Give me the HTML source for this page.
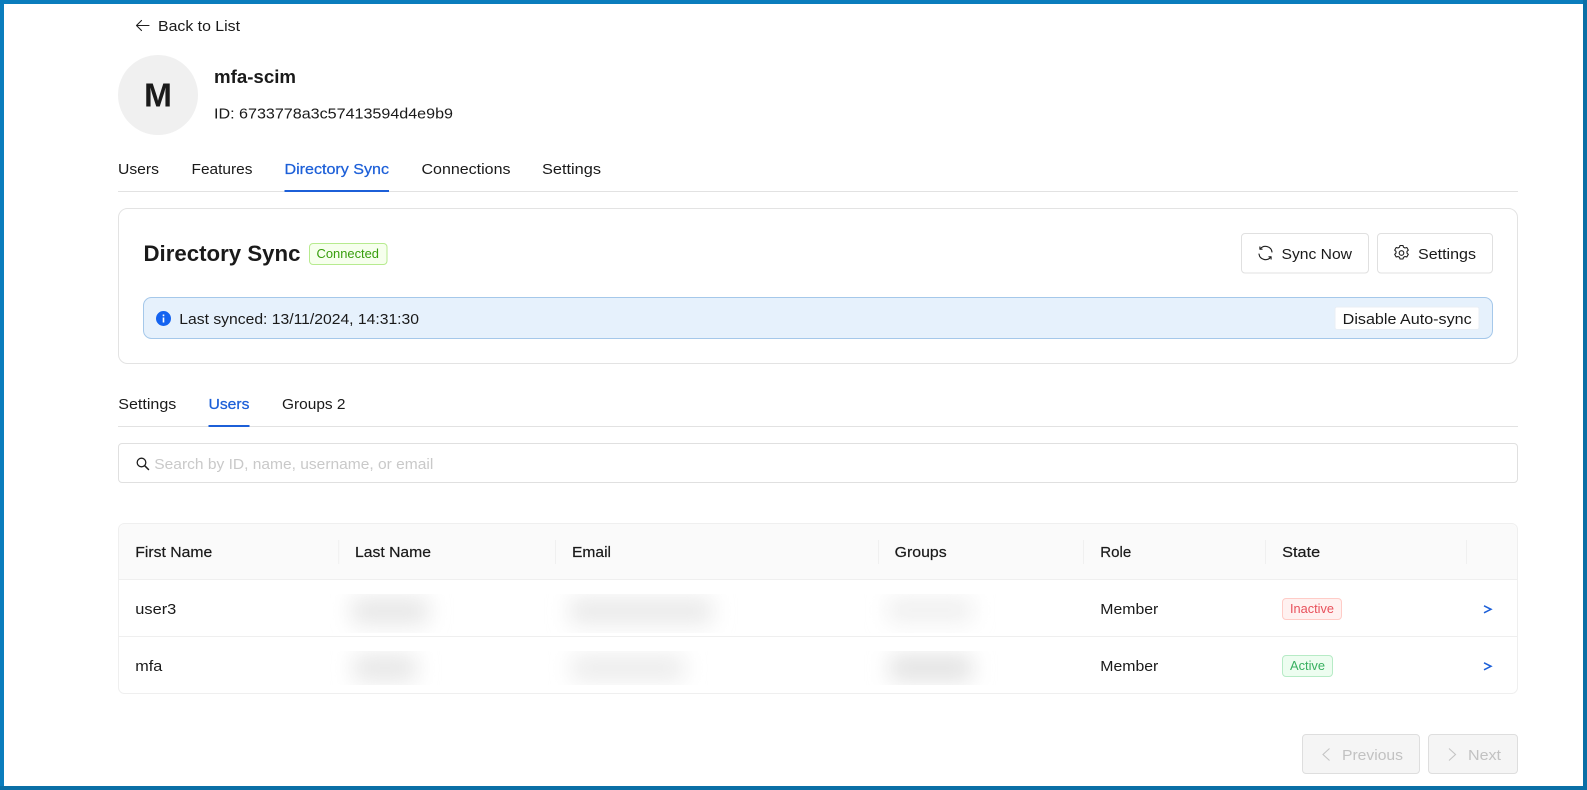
<!DOCTYPE html>
<html lang="en">
<head>
<meta charset="utf-8">
<title>Directory Sync</title>
<style>
html,body{margin:0;padding:0;background:#fff;width:1587px;height:790px;overflow:hidden}
svg{display:block}
text{font-family:"Liberation Sans",Arial,sans-serif;font-size:15.2px;fill:#1a1a1a}
.b{font-weight:bold}
.blue{fill:#1c5fd8}
.line{stroke:#e2e2e2;stroke-width:1;fill:none}
.sep{stroke:#f0f0f0;stroke-width:1}
.ic{fill:none;stroke:#1f1f1f;stroke-width:1.1;stroke-linecap:round;stroke-linejoin:round}
</style>
</head>
<body>
<svg width="1587" height="790" viewBox="0 0 1587 790" xmlns="http://www.w3.org/2000/svg">
<defs>
<filter id="bl" x="-100%" y="-300%" width="300%" height="700%"><feGaussianBlur stdDeviation="11"/></filter>
<clipPath id="r1"><rect x="330" y="594" width="670" height="39"/></clipPath>
<clipPath id="r2"><rect x="330" y="651" width="670" height="34"/></clipPath>
</defs>
<rect width="1587" height="790" fill="#fff"/>

<!-- frame -->
<rect x="0" y="0" width="1587" height="4" fill="#0a7dbd"/>
<rect x="0" y="0" width="4" height="790" fill="#0a7dbd"/>
<rect x="1583" y="0" width="4" height="790" fill="#0a6fa6"/>
<rect x="0" y="786" width="1587" height="4" fill="#0a6fa6"/>

<!-- back -->
<path d="M149 25.500H136.500M141.500 20.500l-5 5 5 5" class="ic"/>
<text x="158" y="31" textLength="82" lengthAdjust="spacingAndGlyphs">Back to List</text>

<!-- avatar -->
<circle cx="158" cy="95" r="40" fill="#f0f0f0"/>
<text x="144" y="106.500" class="b" style="font-size:33px" textLength="28" lengthAdjust="spacingAndGlyphs">M</text>
<text x="214" y="83" class="b" style="font-size:18.500px" textLength="82" lengthAdjust="spacingAndGlyphs">mfa-scim</text>
<text x="214" y="118.500" textLength="239" lengthAdjust="spacingAndGlyphs">ID: 6733778a3c57413594d4e9b9</text>

<!-- main tabs -->
<text x="118" y="174" textLength="41" lengthAdjust="spacingAndGlyphs">Users</text>
<text x="191.500" y="174" textLength="61" lengthAdjust="spacingAndGlyphs">Features</text>
<text x="284.500" y="174" class="blue" style="stroke:#1c5fd8;stroke-width:.25" textLength="104.500" lengthAdjust="spacingAndGlyphs">Directory Sync</text>
<text x="421.500" y="174" textLength="89" lengthAdjust="spacingAndGlyphs">Connections</text>
<text x="542" y="174" textLength="59" lengthAdjust="spacingAndGlyphs">Settings</text>
<line x1="118" y1="191.500" x2="1518" y2="191.500" class="line"/>
<rect x="284.500" y="190" width="104.500" height="2" fill="#1c5fd8"/>

<!-- card -->
<rect x="118.500" y="208.500" width="1399" height="155" rx="9" fill="#fff" stroke="#e3e3e3"/>
<text x="143.500" y="261" class="b" style="font-size:22px" textLength="157" lengthAdjust="spacingAndGlyphs">Directory Sync</text>
<rect x="309.500" y="243.500" width="77.500" height="21" rx="3.500" fill="#f6ffed" stroke="#b7eb8f"/>
<text x="316.500" y="258" style="font-size:12.500px;fill:#389e0d" textLength="62.500" lengthAdjust="spacingAndGlyphs">Connected</text>

<!-- sync now -->
<rect x="1241.500" y="233.500" width="127" height="39.500" rx="3.500" fill="#fff" stroke="#e0e0e0"/>
<path d="M1272 252a6.600 6.600 0 0 0-11.800-3" class="ic"/>
<path d="M1259 254a6.600 6.600 0 0 0 11.800 3" class="ic"/>
<path d="M1259.900 246.900v2.300h2.200M1271.100 259.100v-2.300h-2.200" class="ic"/>
<text x="1281.500" y="259" textLength="70.500" lengthAdjust="spacingAndGlyphs">Sync Now</text>

<!-- settings -->
<rect x="1377.500" y="233.500" width="115" height="39.500" rx="3.500" fill="#fff" stroke="#e0e0e0"/>
<circle cx="1401.500" cy="253" r="2.300" class="ic"/>
<path d="M1400 246h3l.5 1.700 1.500.8 1.800-.5 1.500 2.600-1.300 1.300v1.700l1.300 1.300-1.500 2.600-1.800-.5-1.500.8-.5 1.700h-3l-.5-1.700-1.500-.8-1.800.5-1.500-2.600 1.300-1.300v-1.700l-1.300-1.300 1.500-2.600 1.800.5 1.500-.8z" transform="translate(0,-.5)" class="ic"/>
<text x="1418" y="259" textLength="58" lengthAdjust="spacingAndGlyphs">Settings</text>

<!-- info bar -->
<rect x="143.500" y="297.500" width="1349" height="41" rx="8" fill="#e6f1fc" stroke="#a5c8ea"/>
<circle cx="163.500" cy="318.500" r="7.500" fill="#1463f0"/>
<rect x="162.700" y="317.500" width="1.600" height="5" fill="#fff"/>
<rect x="162.700" y="314.500" width="1.600" height="1.700" fill="#fff"/>
<text x="179.300" y="324" textLength="239.700" lengthAdjust="spacingAndGlyphs">Last synced: 13/11/2024, 14:31:30</text>
<rect x="1335" y="307" width="144" height="22.500" rx="2" fill="#fff" stroke="#e8eef5"/>
<text x="1342.700" y="324" textLength="129" lengthAdjust="spacingAndGlyphs">Disable Auto-sync</text>

<!-- sub tabs -->
<text x="118.300" y="409" textLength="58" lengthAdjust="spacingAndGlyphs">Settings</text>
<text x="208.500" y="409" class="blue" style="stroke:#1c5fd8;stroke-width:.25" textLength="41" lengthAdjust="spacingAndGlyphs">Users</text>
<text x="282" y="409" textLength="63.500" lengthAdjust="spacingAndGlyphs">Groups 2</text>
<line x1="118" y1="426.500" x2="1518" y2="426.500" class="line"/>
<rect x="208.500" y="425" width="41" height="2" fill="#1c5fd8"/>

<!-- search -->
<rect x="118.500" y="443.500" width="1399" height="39" rx="3.500" fill="#fff" stroke="#e0e0e0"/>
<circle cx="141.500" cy="462.500" r="4.300" class="ic" style="stroke-width:1.300"/>
<path d="M144.800 465.800l3.700 3.700" class="ic" style="stroke-width:1.500"/>
<text x="154.300" y="469" style="fill:#c9c9c9" textLength="279" lengthAdjust="spacingAndGlyphs">Search by ID, name, username, or email</text>

<!-- table -->
<path d="M118.500 579.500V531.500a8 8 0 0 1 8-8H1509.500a8 8 0 0 1 8 8V579.500Z" fill="#fafafa"/>
<rect x="118.500" y="523.500" width="1399" height="170" rx="6" fill="none" stroke="#efefef"/>
<line x1="118.500" y1="579.500" x2="1517.500" y2="579.500" stroke="#efefef"/>
<line x1="118.500" y1="636.500" x2="1517.500" y2="636.500" stroke="#efefef"/>
<line x1="338.700" y1="540" x2="338.700" y2="564" class="sep"/>
<line x1="555.500" y1="540" x2="555.500" y2="564" class="sep"/>
<line x1="878.500" y1="540" x2="878.500" y2="564" class="sep"/>
<line x1="1083.500" y1="540" x2="1083.500" y2="564" class="sep"/>
<line x1="1265.500" y1="540" x2="1265.500" y2="564" class="sep"/>
<line x1="1466.500" y1="540" x2="1466.500" y2="564" class="sep"/>

<g>
<text x="135.300" y="557" style="stroke:#1a1a1a;stroke-width:.2" textLength="77" lengthAdjust="spacingAndGlyphs">First Name</text>
<text x="355" y="557" style="stroke:#1a1a1a;stroke-width:.2" textLength="76" lengthAdjust="spacingAndGlyphs">Last Name</text>
<text x="572" y="557" style="stroke:#1a1a1a;stroke-width:.2" textLength="39" lengthAdjust="spacingAndGlyphs">Email</text>
<text x="894.700" y="557" style="stroke:#1a1a1a;stroke-width:.2" textLength="52" lengthAdjust="spacingAndGlyphs">Groups</text>
<text x="1100.300" y="557" style="stroke:#1a1a1a;stroke-width:.2" textLength="31" lengthAdjust="spacingAndGlyphs">Role</text>
<text x="1282.200" y="557" style="stroke:#1a1a1a;stroke-width:.2" textLength="38" lengthAdjust="spacingAndGlyphs">State</text>
</g>

<!-- blurred cells -->
<g clip-path="url(#r1)">
<rect x="352" y="598" width="76" height="26" fill="#e6e6e6" filter="url(#bl)"/>
<rect x="570" y="598" width="142" height="26" fill="#e9e9e9" filter="url(#bl)"/>
<rect x="888" y="598" width="84" height="24" fill="#efefef" filter="url(#bl)"/>
</g>
<g clip-path="url(#r2)">
<rect x="354" y="655" width="62" height="26" fill="#e6e6e6" filter="url(#bl)"/>
<rect x="572" y="655" width="112" height="26" fill="#ececec" filter="url(#bl)"/>
<rect x="890" y="655" width="82" height="26" fill="#e2e2e2" filter="url(#bl)"/>
</g>

<!-- rows -->
<text x="135.300" y="614" textLength="41" lengthAdjust="spacingAndGlyphs">user3</text>
<text x="135.300" y="671" textLength="27" lengthAdjust="spacingAndGlyphs">mfa</text>
<text x="1100.300" y="614" textLength="58" lengthAdjust="spacingAndGlyphs">Member</text>
<text x="1100.300" y="671" textLength="58" lengthAdjust="spacingAndGlyphs">Member</text>

<rect x="1282.500" y="598.500" width="59" height="21" rx="3.500" fill="#fff1f0" stroke="#ffccc7"/>
<text x="1290" y="613" style="font-size:12.500px;fill:#e8505b" textLength="44" lengthAdjust="spacingAndGlyphs">Inactive</text>
<rect x="1282.500" y="655.500" width="50" height="21" rx="3.500" fill="#edfdf0" stroke="#b7ebc6"/>
<text x="1290" y="670" style="font-size:12.500px;fill:#38b060" textLength="35" lengthAdjust="spacingAndGlyphs">Active</text>

<path d="M1484 605.800l7 3.500-7 3.500" fill="none" stroke="#1c5fd8" stroke-width="1.500"/>
<path d="M1484 662.800l7 3.500-7 3.500" fill="none" stroke="#1c5fd8" stroke-width="1.500"/>

<!-- pagination -->
<rect x="1302.500" y="734.500" width="117" height="39" rx="3.500" fill="#f5f5f5" stroke="#dedede"/>
<path d="M1329.500 748.500l-6.500 6 6.500 6" fill="none" stroke="#c4c4c4" stroke-width="1.100"/>
<text x="1342" y="760" style="fill:#c2c2c2" textLength="61" lengthAdjust="spacingAndGlyphs">Previous</text>
<rect x="1428.500" y="734.500" width="89" height="39" rx="3.500" fill="#f5f5f5" stroke="#dedede"/>
<path d="M1449 748.500l6.500 6-6.500 6" fill="none" stroke="#c4c4c4" stroke-width="1.100"/>
<text x="1468" y="760" style="fill:#c2c2c2" textLength="33" lengthAdjust="spacingAndGlyphs">Next</text>
</svg>
</body>
</html>
